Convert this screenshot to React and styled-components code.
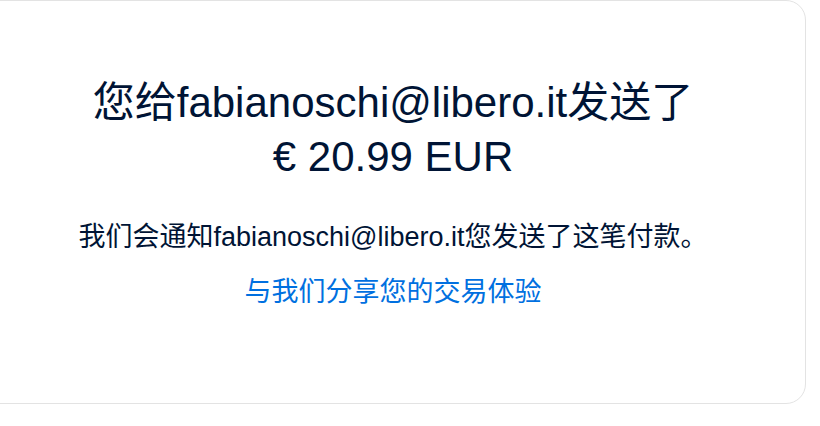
import React from "react";
import styled, { createGlobalStyle } from "styled-components";

const GlobalStyle = createGlobalStyle`
  body {
    margin: 0;
    background: #fff;
    font-family: "Liberation Sans", Arial, "Noto Sans CJK SC", sans-serif;
  }
`;

const Card = styled.div`
  box-sizing: border-box;
  width: 826px;
  height: 404px;
  margin-left: -20px;
  padding-top: 75px;
  border: 1px solid #e3e3e3;
  border-radius: 20px;
  background: #fff;
  display: flex;
  flex-direction: column;
  align-items: center;
  text-align: center;
`;

const Title = styled.h1`
  margin: 0;
  font-size: 42px;
  font-weight: 400;
  line-height: 54px;
  color: #001435;
`;

const Notice = styled.p`
  margin: 35px 0 0;
  font-size: 27px;
  line-height: 36px;
  color: #001435;
`;

const ShareLink = styled.a`
  margin-top: 19px;
  font-size: 27px;
  line-height: 36px;
  color: #0070e0;
  text-decoration: none;
  cursor: pointer;
`;

export default function App() {
  const email = "fabianoschi@libero.it";

  return (
    <>
      <GlobalStyle />
      <Card>
        <Title>
          您给{email}发送了
          <br />€ 20.99 EUR
        </Title>
        <Notice>我们会通知{email}您发送了这笔付款。</Notice>
        <ShareLink>与我们分享您的交易体验</ShareLink>
      </Card>
    </>
  );
}
